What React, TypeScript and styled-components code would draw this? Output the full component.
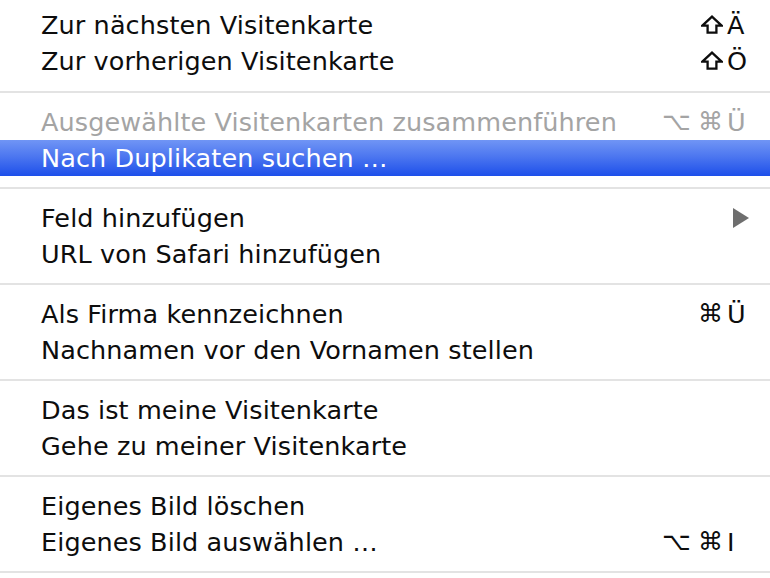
import styled, { createGlobalStyle } from "styled-components";

const GlobalStyle = createGlobalStyle`
  html, body {
    margin: 0;
    padding: 0;
    background: #ffffff;
  }
  body {
    font-family: "DejaVu Sans", "Liberation Sans", sans-serif;
  }
`;

type Mod = "shift" | "alt" | "cmd";

type Item = {
  label: string;
  mods?: Mod[];
  keyChar?: string;
  disabled?: boolean;
  selected?: boolean;
  submenu?: boolean;
};

const groups: Item[][] = [
  [
    { label: "Zur nächsten Visitenkarte", mods: ["shift"], keyChar: "Ä" },
    { label: "Zur vorherigen Visitenkarte", mods: ["shift"], keyChar: "Ö" },
  ],
  [
    { label: "Ausgewählte Visitenkarten zusammenführen", mods: ["alt", "cmd"], keyChar: "Ü", disabled: true },
    { label: "Nach Duplikaten suchen …", selected: true },
  ],
  [
    { label: "Feld hinzufügen", submenu: true },
    { label: "URL von Safari hinzufügen" },
  ],
  [
    { label: "Als Firma kennzeichnen", mods: ["cmd"], keyChar: "Ü" },
    { label: "Nachnamen vor den Vornamen stellen" },
  ],
  [
    { label: "Das ist meine Visitenkarte" },
    { label: "Gehe zu meiner Visitenkarte" },
  ],
  [
    { label: "Eigenes Bild löschen" },
    { label: "Eigenes Bild auswählen …", mods: ["alt", "cmd"], keyChar: "I" },
  ],
];

const ShiftIcon = () => (
  <ShiftSvg width="22" height="19" viewBox="0 0 22 19">
    <path
      d="M11 1.6 L20.6 10.6 L15.4 10.6 L15.4 17.6 L6.6 17.6 L6.6 10.6 L1.4 10.6 Z"
      fill="none"
      stroke="currentColor"
      strokeWidth="2.3"
      strokeLinejoin="miter"
    />
  </ShiftSvg>
);

const ModGlyph = ({ mod }: { mod: Mod }) => {
  if (mod === "shift") return <ShiftIcon />;
  return <Glyph>{mod === "alt" ? "⌥" : "⌘"}</Glyph>;
};

const App = () => {
  return (
    <>
      <GlobalStyle />
      <Menu>
        {groups.map((group, gi) => (
          <Group key={gi} first={gi === 0}>
            {group.map((item) => (
              <Row key={item.label} selected={item.selected} disabled={item.disabled}>
                <Label>{item.label}</Label>
                <Mods>
                  {item.mods?.map((m) => <ModGlyph key={m} mod={m} />)}
                </Mods>
                <KeyCell>
                  {item.keyChar}
                  {item.submenu && (
                    <Arrow width="16" height="20" viewBox="0 0 16 20">
                      <path d="M0 0 L16 10 L0 20 Z" fill="#6e6e6e" />
                    </Arrow>
                  )}
                </KeyCell>
              </Row>
            ))}
          </Group>
        ))}
      </Menu>
    </>
  );
};

export default App;

const Menu = styled.div`
  width: 770px;
  height: 578px;
  overflow: hidden;
  background: #ffffff;
  display: flex;
  flex-direction: column;
`;

const Group = styled.div<{ first?: boolean }>`
  padding: ${(p) => (p.first ? "7px 0 12px" : "11px 0")};
  border-bottom: 2px solid #e3e3e3;
  display: flex;
  flex-direction: column;
`;

const Row = styled.div<{ selected?: boolean; disabled?: boolean }>`
  display: grid;
  grid-template-columns: 1fr auto 24px;
  column-gap: 4px;
  align-items: center;
  height: 36px;
  padding: 0 19px 0 41px;
  font-size: 25.5px;
  letter-spacing: 0.1px;
  line-height: 36px;
  color: ${(p) => (p.selected ? "#ffffff" : p.disabled ? "#a4a4a4" : "#0d0d0d")};
  background: ${(p) =>
    p.selected ? "linear-gradient(#7095f5 0%, #4d77f0 45%, #1d4fea 100%)" : "transparent"};
  white-space: nowrap;
`;

const Label = styled.span``;

const Mods = styled.span`
  display: flex;
  align-items: center;
  justify-content: flex-end;
  gap: 7px;
`;

const Glyph = styled.span`
  font-size: 25px;
`;

const ShiftSvg = styled.svg`
  display: block;
  margin-top: -2px;
`;

const KeyCell = styled.span`
  display: flex;
  align-items: center;
  justify-content: flex-start;
`;

const Arrow = styled.svg`
  margin-left: 6px;
`;
